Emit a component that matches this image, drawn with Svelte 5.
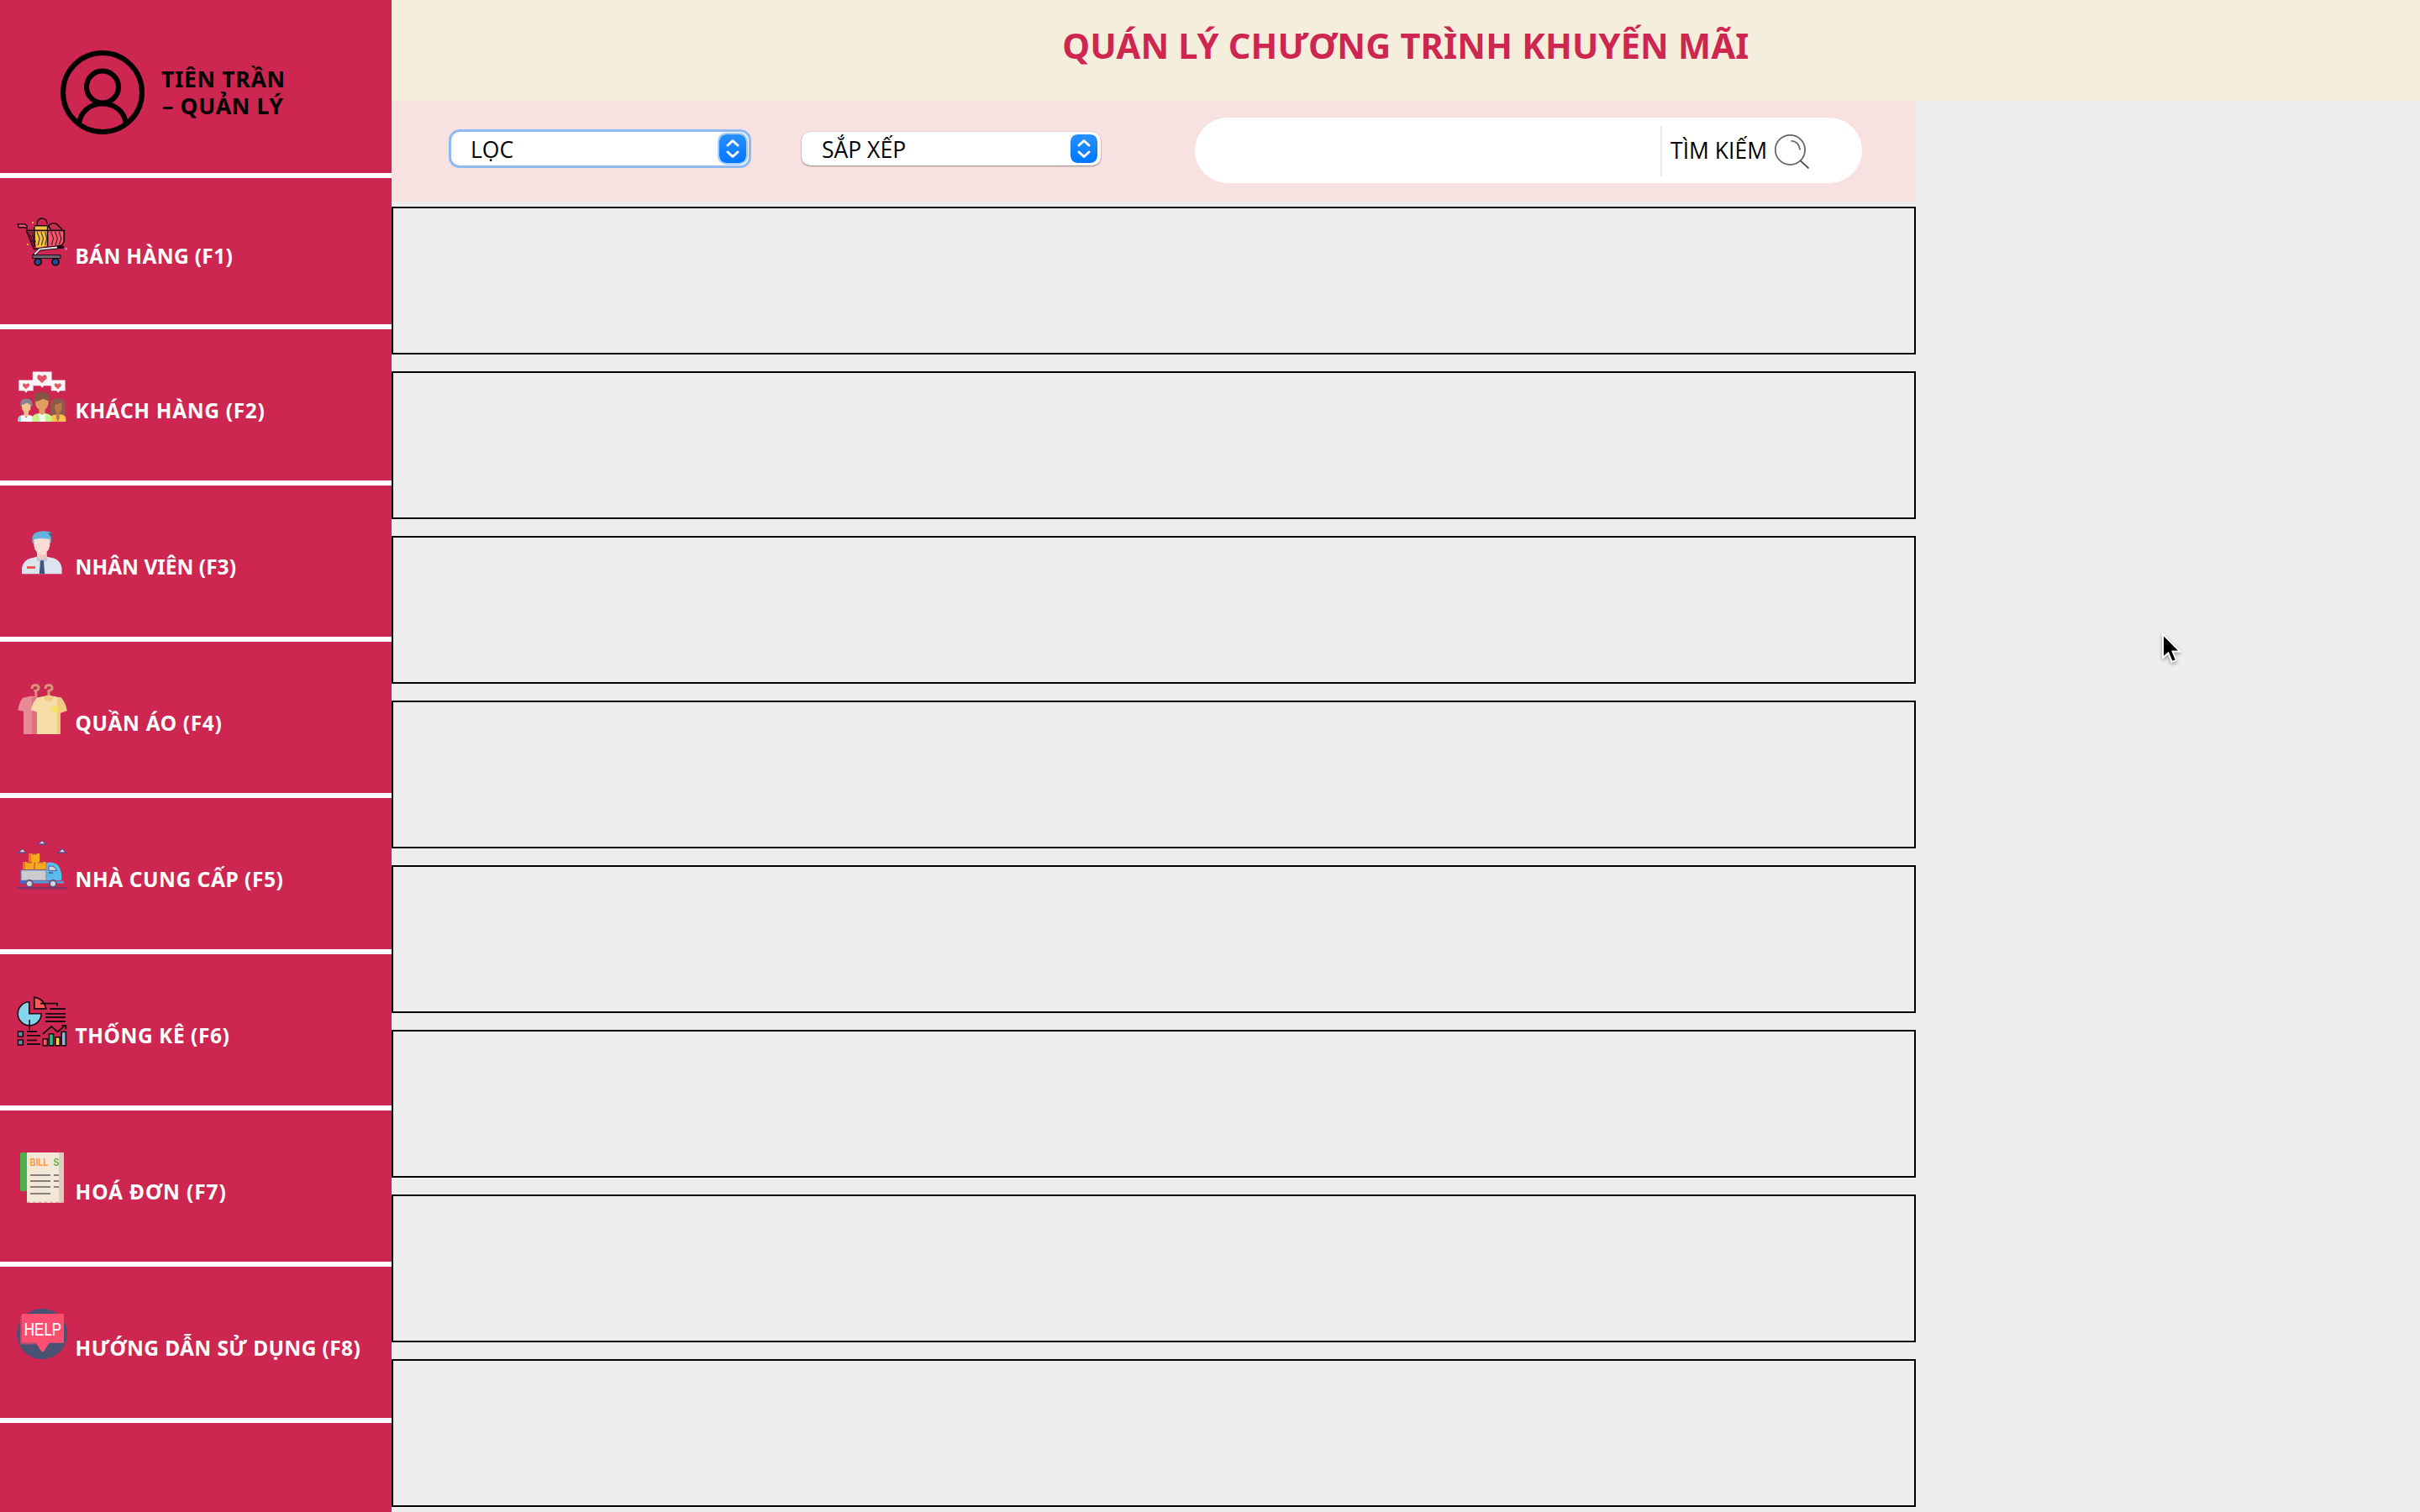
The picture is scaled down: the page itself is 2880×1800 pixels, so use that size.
<script>
  const menu = [
    { icon: 'cart', label: 'BÁN HÀNG (F1)', tracking: 0.33 },
    { icon: 'customers', label: 'KHÁCH HÀNG (F2)', tracking: 0.66 },
    { icon: 'staff', label: 'NHÂN VIÊN (F3)', tracking: 0 },
    { icon: 'clothes', label: 'QUẦN ÁO (F4)', tracking: 0.65 },
    { icon: 'truck', label: 'NHÀ CUNG CẤP (F5)', tracking: 0.54 },
    { icon: 'stats', label: 'THỐNG KÊ (F6)', tracking: 0.55 },
    { icon: 'bill', label: 'HOÁ ĐƠN (F7)', tracking: 0.9 },
    { icon: 'help', label: 'HƯỚNG DẪN SỬ DỤNG (F8)', tracking: 0.39 }
  ];
  const selects = [
    { label: 'LỌC', focused: true },
    { label: 'SẮP XẾP', focused: false }
  ];
  const cards = Array.from({ length: 8 }, (_, i) => i);
</script>

{#snippet bubble(x, y, w, h)}
  <path d="M{x} {y}h{w}v{h}h{-w / 2 + 1}l-1 1.3l-1 -1.3h{-w / 2 + 1}z" fill="#f7f5f6" />
{/snippet}

{#snippet heart(x, y, s)}
  <path transform="translate({x} {y}) scale({s})" d="M0 2.6L-2.8 0V-1.6L-1.6 -2.4L0 -1.4L1.6 -2.4L2.8 -1.6V0Z" fill="#e25563" />
{/snippet}

{#snippet icon(name)}
  <svg class="icon" viewBox="0 0 30 30">
    {#if name === 'cart'}
      <path d="M12.2 5V3.4Q12.6 1 15.2 1Q18 1.2 18 4.4" fill="none" stroke="#1d0c14" stroke-width=".7" />
      <path d="M18.5 6Q20.5 3 23.5 4.2L27 7.5" fill="#c8324c" stroke="#1d0c14" stroke-width=".8" />
      <path d="M18.4 8H27.6L27.4 16L24.5 17.6H18.4Z" fill="#f4566c" />
      <path d="M10.4 5.4H18.5L20 8H18V17.4L11.5 18.6L10.4 8Z" fill="#f6c544" />
      <path d="M10.4 6V17.6M10.4 5.4H18.6L20.4 8.2M18.3 6V17.6" fill="none" stroke="#1d0c14" stroke-width=".8" />
      <path d="M5.6 8.2H28.2V14.8L26.6 17.2L11.4 19.2H10.2L5.6 8.2" fill="none" stroke="#1d0c14" stroke-width=".8" />
      <path d="M7 9l4 9M9 9l1.8 8M12 9l1.6 4-1 4M14.4 9l1.4 4-1.2 4M16.8 9l1 4-1 4M20.4 9l1.4 4-1.2 4M22.8 9l1.4 4-1.2 4M25.2 9l1.2 4-1.2 3.6M7 11.6h3.4M8.4 14.6h3" fill="none" stroke="#1d0c14" stroke-width=".6" opacity=".75" />
      <path d="M28 18L13.4 19.6L10 23" fill="none" stroke="#1d0c14" stroke-width="1.6" />
      <path d="M24 18.2L13.6 19.3L10.6 22.4" fill="none" stroke="#e9e3ee" stroke-width="1" />
      <rect x="9.4" y="22.8" width="16.6" height="2" fill="#6c6770" stroke="#1d0c14" stroke-width=".5" />
      <circle cx="12.6" cy="26.9" r="2" fill="#1f4d96" stroke="#1d0c14" stroke-width=".9" />
      <circle cx="23" cy="26.9" r="2" fill="#1f4d96" stroke="#1d0c14" stroke-width=".9" />
      <path d="M.6 4.4H4.6L6 5.2V7L4.6 6.4H1.2Z" fill="#f4566c" stroke="#1d0c14" stroke-width=".7" />
      <path d="M9 3h1v1h-1zM6 16h1v1h-1z" fill="#f0a94a" />
      <path d="M28.6 18.4h1.4v1.4h-1.4z" fill="#8f93c8" />
    {:else if name === 'customers'}
      {@render bubble(9.4, 0.2, 11.4, 8.4)}
      {@render bubble(1.2, 5.2, 8.6, 6.4)}
      {@render bubble(20.4, 5.2, 8.4, 6.4)}
      {@render heart(15, 4.4, 1)}
      {@render heart(5.5, 8.8, 0.7)}
      {@render heart(24.4, 8.8, 0.7)}
      <path d="M20 26V19.5Q20.4 16 24.6 16Q28.8 16.4 29 20V26Z" fill="#8b5a4c" />
      <path d="M20 30V27.6Q20.6 26 23 25.8H26.5Q29 26.2 29.2 28V30Z" fill="#fdc14e" />
      <path d="M22.6 20L26.8 18.6V22Q26.6 24 25.4 24.4V28L24.4 30L23.4 28V24Q22.6 23.6 22.6 22Z" fill="#b97a45" />
      <path d="M2.2 21V18.4Q2.8 16.2 5.6 16.2Q8.8 16.4 9.2 19V21Z" fill="#84858f" />
      <path d="M3 20Q5 19.6 6 18.8L8.2 20V22.6L7 24V27H4.2V24Q3 23 3 21.6Z" fill="#f5c391" />
      <path d="M.8 30V28Q1.4 26.2 4 26L5.5 27.6L7.4 26Q9.6 26.2 9.6 28V30Z" fill="#f6fbfb" />
      <path d="M.8 30V28Q1.2 26.8 2.4 26.3V30Z" fill="#8ed5d9" />
      <path d="M10.4 18V15Q10.4 12.4 13.4 12.6Q15 11.6 17 12.8Q20 13 19.4 16L19 18Z" fill="#865442" />
      <path d="M11 18Q14 17.6 15.4 16.4L18.8 17.6V19.4Q18.2 22 16.8 22.8V26H13.2V22.8Q11 21.4 11 18Z" fill="#e09e62" />
      <path d="M9.2 30V27.4Q9.6 25.6 13 25L15 29L17 25Q20.4 25.6 20.8 27.4V30Z" fill="#c6f28f" />
      <path d="M13 25L15 26L17 25L16.8 30H13.6Z" fill="#f7fbf2" />
    {:else if name === 'staff'}
      <path d="M9.2 9V5.6Q10 2.2 15 2.2Q18.4 2 20.6 3L20.4 5V9L19.4 9.6H10Z" fill="#62b4dd" />
      <path d="M18.4 3Q20 3.6 20.6 3V6Z" fill="#41638f" />
      <path d="M10.2 7Q15 6 19.6 7V11Q19.2 13.4 17.8 14.6V17.6L15 19L12 17.6V14.6Q10.4 13 10.2 11Z" fill="#fbdcd5" />
      <path d="M12 15.4Q15 17 17.8 15.4V18L15 19.4L12 18Z" fill="#f5c6c1" />
      <path d="M3 27.6V24Q4 19.2 8.4 18.2L12 17.4L15 19.6L17.8 17.4L22 18.2Q26 19.6 26.8 24V27.6Z" fill="#dde4ee" />
      <path d="M12 17.4L15 19.4L17.8 17.4L18.2 20L16.4 20.6L15 19.4L13.4 20.6L11.8 19.6Z" fill="#c4cbd6" />
      <path d="M14 19.6H16L16.6 27.6H13.4Z" fill="#41567f" />
      <rect x="6" y="23.1" width="5" height="1.4" fill="#f2524f" />
    {:else if name === 'clothes'}
      <path d="M9 3Q9 .7 11 .7Q13.4 .9 13 3Q12.4 4 11 4.2Q12 6 11 8.4M17 3Q17 .7 19 .7Q21.4 .9 21 3Q20.4 4 19 4.2V8" fill="none" stroke="#d49678" stroke-width="1.5" />
      <path d="M3.6 8.4L8.6 7.2L12.6 8V30H4V16.4L.6 15.8Q1.4 11 3.6 8.4Z" fill="#e88a96" />
      <path d="M9 8L12.6 8.4V30H9Z" fill="#df7080" />
      <path d="M12 8.4L16 7.4Q19 9.6 22 7.4L26.4 8.4Q29 11.4 29.8 16L26 17.4V30H12V16.8L8.4 15.8Q9.4 11 12 8.4Z" fill="#f6dca6" />
      <path d="M15.8 7.6Q19 5.8 22 7.6Q21.6 10.4 19 10.6Q16.2 10.4 15.8 7.6ZM24 8L26.4 8.4Q29 11.4 29.8 16L26 17.4V30H24Z" fill="#f1cb84" />
      <circle cx="22.8" cy="15.2" r="2" fill="#f7e35e" />
    {:else if name === 'truck'}
      <path d="M12 2.9L13 1.6L14.4 1.2V0H15.8V1.2L17 1.6L18 2.9ZM0 7.9L1 6.4L2.6 6.2V5H4V6.2L5 6.6L6 7.9ZM24 7.9L25 6.6L26 6.2V5H27.6V6.2L29 6.6L30 7.9Z" fill="#5c4e86" />
      <path d="M13.4 2.1L15 .7L16.6 2.1ZM1.6 7.1L3.4 5.6L4.8 7.1ZM25.4 7.1L27 5.6L28.6 7.1Z" fill="#d9dede" />
      <path d="M7 8H13.6V13H17.4V18H3.6V13H7Z" fill="#f6a91f" />
      <path d="M7 8H8.4V13H7ZM3.6 13H5V18H3.6Z" fill="#f36b30" />
      <path d="M9 8h3v.8h-3zM6 13h3v.8h-3zM12.6 13h3v.8h-3zM10.2 13.4h.7v4.6h-.7z" fill="#c75a3a" />
      <path d="M2.4 17.8H17.6V24.2H2.4Z" fill="#c9ccd0" stroke="#71608f" stroke-width=".6" />
      <path d="M17.6 24V14Q18 13.2 19.6 13.2Q23.4 13.4 25 16.2Q26.6 19 26.6 24Z" fill="#5cb9ec" />
      <path d="M23 14.4Q26.4 17 26.2 23" fill="none" stroke="#35dbe8" stroke-width=".9" />
      <path d="M19 15.6Q22.6 15 23.8 18.2H19Z" fill="#cfd5da" stroke="#4a5a94" stroke-width=".5" />
      <path d="M19 19.2h2.6v.7h-2.6z" fill="#314f93" />
      <path d="M2 24.4H28V25.8H2Z" fill="#4d9de0" />
      <path d="M2 24.4h3v1.4h-3z" fill="#3d63e0" />
      <circle cx="7.5" cy="26" r="2" fill="#d5d6da" stroke="#5d5584" stroke-width="1" />
      <circle cx="21.5" cy="26" r="2" fill="#d5d6da" stroke="#5d5584" stroke-width="1" />
      <path d="M0 28H30V29.2H0Z" fill="#843266" />
    {:else if name === 'stats'}
      <path d="M7.4 3.4V10.4H14.6A7 7 0 1 1 7.4 3.4Z" fill="#86d4ec" stroke="#1a0a12" stroke-width=".8" />
      <path d="M7.6 14V20" stroke="#1a0a12" stroke-width=".8" />
      <path d="M10.4 .6Q16 1.4 17.4 7.4H10.4Z" fill="#fb5a58" stroke="#1a0a12" stroke-width=".9" />
      <path d="M14 4.3H24V6" fill="none" stroke="#1a0a12" stroke-width=".9" />
      <path d="M19.6 7.5H29M17 10.4H29M17 12.5H29M17 15H29" stroke="#1a0a12" stroke-width=".9" />
      <path d="M6 21H12M6 23.4H14M6 26.2H12M6 28.5H14" stroke="#1a0a12" stroke-width=".9" />
      <path d="M.7 21h3v3h-3zM.7 26h3v3h-3z" fill="#5f8da3" stroke="#1a0a12" stroke-width=".8" />
      <path d="M15.4 22.6L20.6 18L24.2 21.2L29 17.2M26.6 17.4H29.2V19.6" fill="none" stroke="#1a0a12" stroke-width=".9" />
      <g stroke="#1a0a12" stroke-width=".8">
        <rect x="15.6" y="25.4" width="2.6" height="4" fill="#fb5a58" />
        <rect x="19.2" y="22.4" width="2.6" height="7" fill="#1fc48d" />
        <rect x="23" y="24.4" width="2.6" height="5" fill="#ffd93b" />
        <rect x="26.6" y="21.2" width="2.6" height="8.2" fill="#86b8d8" />
      </g>
    {:else if name === 'bill'}
      <rect x="2" y="0" width="4" height="23" rx=".8" fill="#4caf50" />
      <rect x="6" y="0" width="22" height="30" fill="#f3e8d7" />
      <rect x="25" y="0" width="3" height="30" fill="#dccfbd" />
      <text class="glyph" x="7.8" y="7.9" textLength="11" lengthAdjust="spacingAndGlyphs" fill="#fb9a4b">BILL</text>
      <text class="glyph" x="21.8" y="7.9" textLength="3.4" lengthAdjust="spacingAndGlyphs" fill="#55b259">S</text>
      <path d="M8 13.5H20M22 13.5H25M8 17H20M22 17H25M8 20.5H20M22 20.5H25M8 24.5H20" stroke="#85807b" stroke-width="1" />
      <path d="M6 29.6H28" stroke="#e7a8a8" stroke-width=".8" stroke-dasharray="2 1.4" />
    {:else}
      <circle cx="15" cy="15" r="15" fill="#485272" />
      <path d="M3 3H28V20.4H19.2L16 25.6H14.8L11.4 20.4H3Z" fill="#ff4f70" />
      <path d="M2 4h1v16.4h9v.8h-10z" fill="#b54c70" />
      <text class="glyph help" x="4.4" y="15.9" textLength="22.2" lengthAdjust="spacingAndGlyphs" fill="#fff">HELP</text>
    {/if}
  </svg>
{/snippet}

<div class="app">
  <aside>
    <section class="profile">
      <svg class="avatar" viewBox="0 0 100 100">
        <g fill="none" stroke="#000" stroke-width="6">
          <circle cx="50" cy="50" r="47" />
          <circle cx="50" cy="43.5" r="19" />
          <path d="M22 87.5C24 72 36 63.5 50 63.5S76 72 78 87.5" />
        </g>
      </svg>
      <p><span>TIÊN TRẦN</span><span class="role">– QUẢN LÝ</span></p>
    </section>
    <nav>
      {#each menu as item}
        <a href="#{item.icon}">
          {@render icon(item.icon)}
          <span class="label" style="letter-spacing: {item.tracking}px">{item.label}</span>
        </a>
      {/each}
    </nav>
  </aside>

  <main>
    <header><h1>QUÁN LÝ CHƯƠNG TRÌNH KHUYẾN MÃI</h1></header>
    <div class="content">
      <div class="toolbar">
        {#each selects as s}
          <div class="select" class:focused={s.focused}>
            <span>{s.label}</span>
            <svg class="stepper" viewBox="0 0 32 34">
              <defs>
                <linearGradient id="blue" x1="0" y1="0" x2="0" y2="1">
                  <stop offset="0" stop-color="#2a90ff" />
                  <stop offset="1" stop-color="#0077ff" />
                </linearGradient>
              </defs>
              <rect width="32" height="34" rx="8" fill="url(#blue)" />
              <path d="M10 13L16 7.5L22 13M10 21L16 26.5L22 21" fill="none" stroke="#fff" stroke-width="3" stroke-linecap="round" stroke-linejoin="round" />
            </svg>
          </div>
        {/each}
        <div class="search">
          <button>
            <span>TÌM KIẾM</span>
            <svg viewBox="0 0 40 40">
              <g fill="none" stroke="#666" stroke-width="1.7">
                <circle cx="18" cy="18" r="17.2" />
                <path d="M19 7.5Q28 8 29.5 18" />
                <path d="M30 30.5L39.5 39.5" stroke="#444" />
              </g>
            </svg>
          </button>
        </div>
      </div>
      <div class="cards">
        {#each cards as c (c)}
          <article></article>
        {/each}
      </div>
    </div>
  </main>

  <svg class="cursor" viewBox="0 0 26 40">
    <path d="M2 2V30L8.4 24.4L12.8 35L18 32.8L13.6 22.6H22.4Z" fill="#000" stroke="#fff" stroke-width="2" />
  </svg>
</div>

<style>
  :global(body) {
    margin: 0;
    background: #eeeeee;
    overflow: hidden;
  }
  .app {
    position: relative;
    display: flex;
    width: 2880px;
    height: 1800px;
    overflow: hidden;
    background: #eeeeee;
    font-family: 'Noto Sans', 'Open Sans', sans-serif;
    color: #000;
  }
  aside {
    width: 466px;
    flex: none;
    background: #cd2650;
  }
  .profile {
    box-sizing: border-box;
    display: flex;
    align-items: flex-start;
    height: 212px;
    padding: 60px 0 0 72px;
    border-bottom: 6px solid #fff;
  }
  .avatar {
    width: 100px;
    height: 100px;
    flex: none;
  }
  .profile p {
    display: flex;
    flex-direction: column;
    margin: 18px 0 0 20px;
    font-size: 26.5px;
    font-weight: 700;
    line-height: 32px;
    letter-spacing: 0.7px;
    white-space: nowrap;
  }
  .profile .role {
    padding-left: 1px;
  }
  nav a {
    box-sizing: border-box;
    display: flex;
    align-items: flex-start;
    height: 186px;
    padding: 50px 0 0 20px;
    border-bottom: 6px solid #fff;
    color: #fff;
    text-decoration: none;
  }
  nav a:first-child {
    height: 180px;
    padding-top: 46px;
  }
  .icon {
    width: 60px;
    height: 60px;
    flex: none;
    overflow: visible;
  }
  .glyph {
    font-family: 'Liberation Sans', sans-serif;
    font-weight: 700;
    font-size: 6.8px;
  }
  .glyph.help {
    font-size: 10.6px;
    font-weight: 400;
  }
  .label {
    margin: 31px 0 0 9.5px;
    font-size: 24.5px;
    font-weight: 700;
    line-height: 32px;
    white-space: nowrap;
  }
  main {
    flex: 1;
  }
  header {
    height: 120px;
    background: #f5eedd;
  }
  h1 {
    margin: 0;
    padding-top: 26px;
    font-size: 41.5px;
    font-weight: 700;
    line-height: 56px;
    letter-spacing: 0.2px;
    text-align: center;
    color: #cd2650;
  }
  .content {
    width: 1814px;
  }
  .toolbar {
    box-sizing: border-box;
    display: flex;
    align-items: flex-start;
    height: 120px;
    padding: 20px 64px 0 71px;
    background: #f7e1e1;
  }
  .select {
    box-sizing: border-box;
    display: flex;
    justify-content: space-between;
    align-items: center;
    width: 356px;
    height: 40px;
    margin: 17px 62px 0 0;
    padding: 0 4px 0 24px;
    border-radius: 10px;
    background: #fff;
    box-shadow: 0 1px 2px rgba(0, 0, 0, 0.4), 0 0 1px rgba(0, 0, 0, 0.25);
    font-family: 'Open Sans', sans-serif;
    font-size: 26.5px;
    font-weight: 500;
    line-height: 40px;
  }
  .select span {
    padding-top: 2px;
  }
  .select.focused {
    width: 354px;
    margin-right: 63px;
    padding: 0 3px 0 23px;
    box-shadow: 0 0 0 3px #8fbaf0;
  }
  .stepper {
    width: 32px;
    height: 34px;
    border-radius: 8px;
  }
  .focused .stepper {
    box-shadow: 0 0 0 2px #a5cdf8;
  }
  .search {
    box-sizing: border-box;
    display: flex;
    justify-content: flex-end;
    width: 794px;
    height: 78px;
    margin-left: auto;
    padding: 10px 63px 0 0;
    border-radius: 39px;
    background: #fff;
  }
  .search button {
    display: flex;
    align-items: flex-start;
    height: 60px;
    padding: 10px 0 0 10px;
    border: 0;
    border-left: 2px solid #e9e9e9;
    background: none;
    color: #000;
    font-family: 'Open Sans', sans-serif;
    font-size: 26.5px;
    font-weight: 500;
    line-height: 38px;
  }
  .search svg {
    width: 41px;
    height: 41px;
    margin-left: 9px;
  }
  .cards {
    display: flex;
    flex-direction: column;
    gap: 20px;
    padding-top: 6px;
  }
  article {
    box-sizing: border-box;
    height: 176px;
    border: 2px solid #000;
  }
  .cursor {
    position: absolute;
    left: 2572px;
    top: 753px;
    width: 26px;
    height: 40px;
    filter: drop-shadow(0 2px 2px rgba(0, 0, 0, 0.35));
  }
</style>
